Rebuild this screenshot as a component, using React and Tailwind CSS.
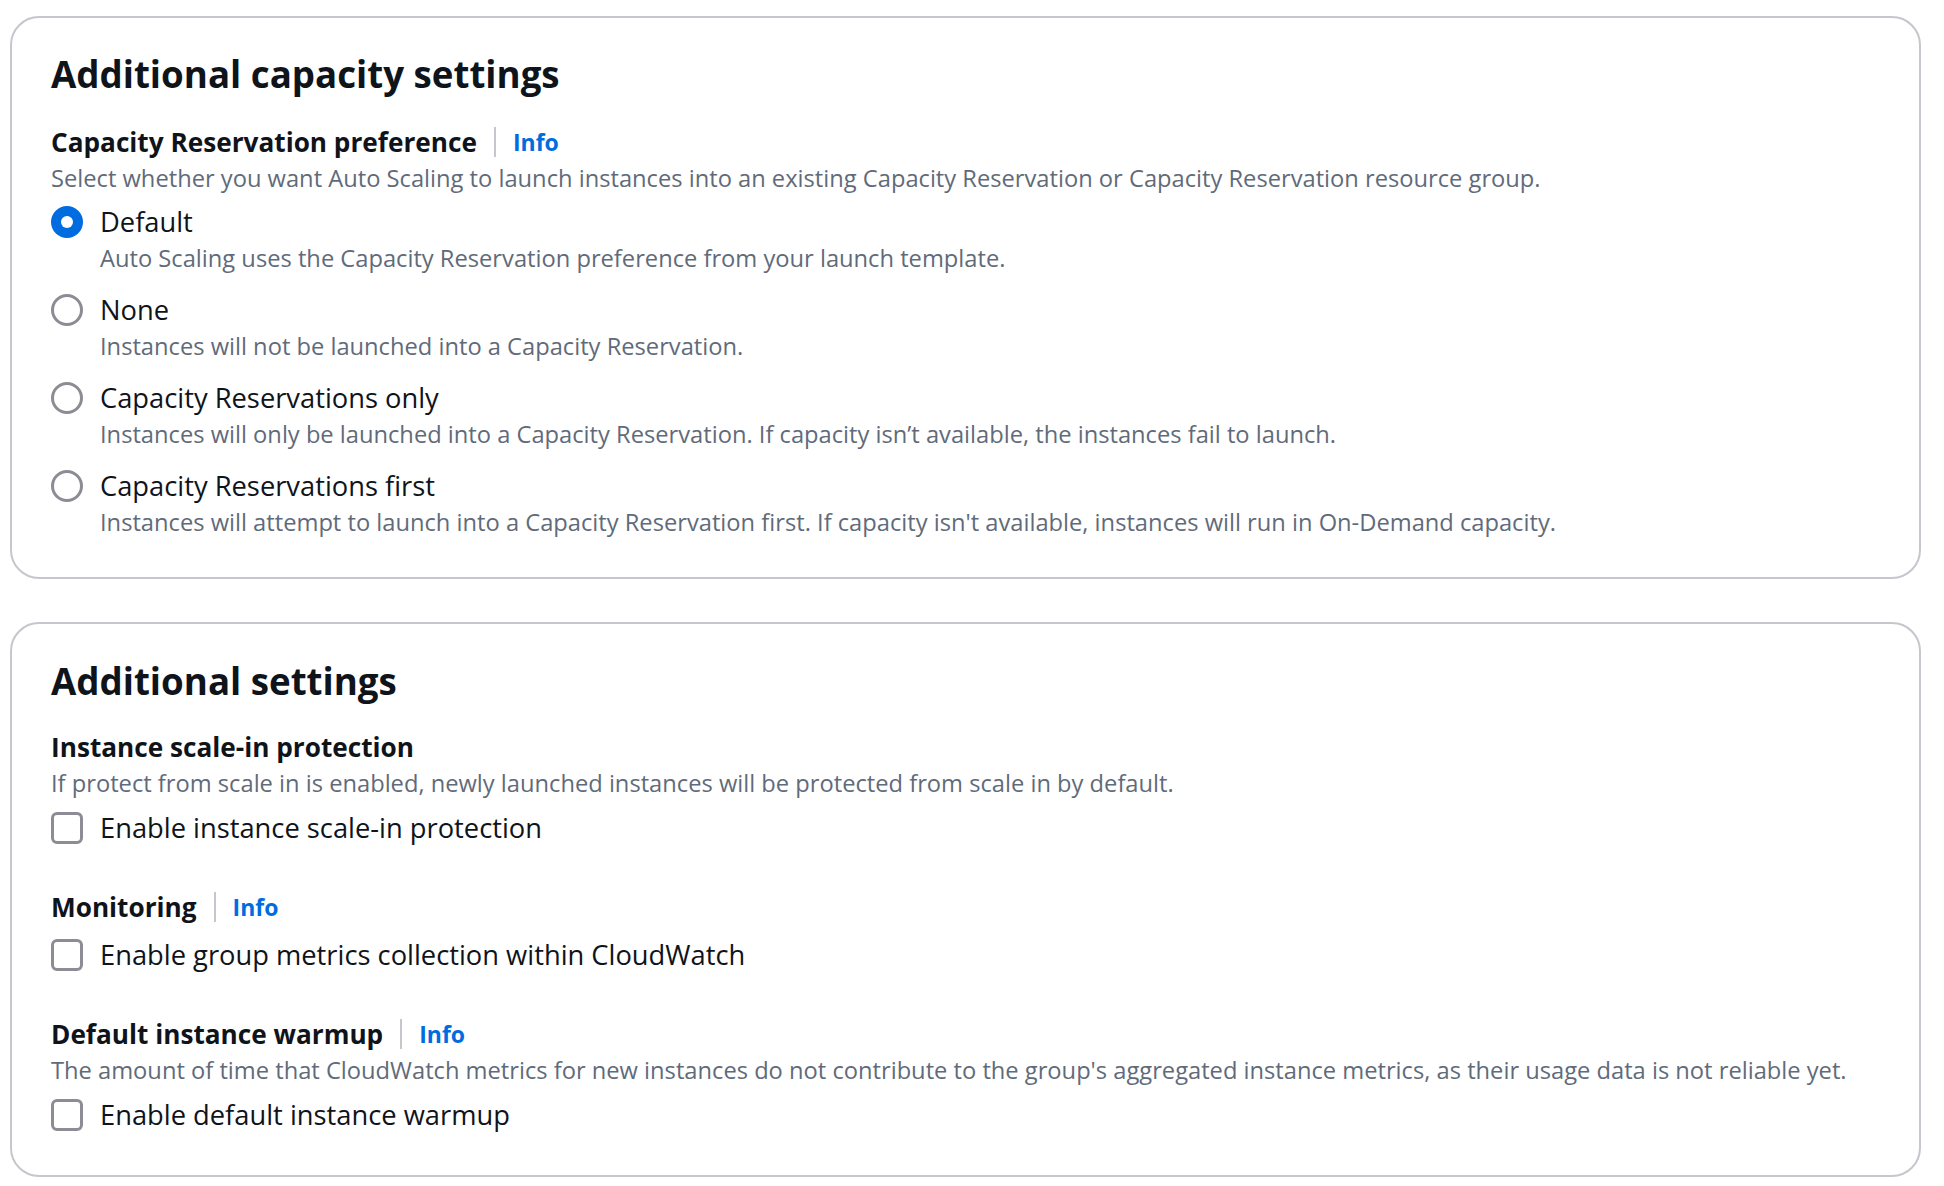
import { useState } from "react";

const capacityOptions = [
  {
    id: "default",
    label: "Default",
    description: "Auto Scaling uses the Capacity Reservation preference from your launch template.",
  },
  {
    id: "none",
    label: "None",
    description: "Instances will not be launched into a Capacity Reservation.",
  },
  {
    id: "only",
    label: "Capacity Reservations only",
    description:
      "Instances will only be launched into a Capacity Reservation. If capacity isn\u2019t available, the instances fail to launch.",
  },
  {
    id: "first",
    label: "Capacity Reservations first",
    description:
      "Instances will attempt to launch into a Capacity Reservation first. If capacity isn't available, instances will run in On-Demand capacity.",
  },
];

const FieldLabel = ({ children, info }) => (
  <div className="flex items-center h-[36px]">
    <span className="text-[26.2px] leading-[36px] font-bold text-[#0f141a]">{children}</span>
    {info && (
      <>
        <span className="ml-[17px] w-[2px] h-[30px] bg-[#c6c6cd]" />
        <a href="#" className="ml-[17px] text-[23px] leading-[36px] font-bold text-[#006ce0]">
          Info
        </a>
      </>
    )}
  </div>
);

const Description = ({ children }) => (
  <p className="text-[23.7px] leading-[36px] text-[#5f6b7a]">{children}</p>
);

const Radio = ({ checked }) =>
  checked ? (
    <span className="w-[32px] h-[32px] rounded-full bg-[#006ce0] flex items-center justify-center">
      <span className="w-[12px] h-[12px] rounded-full bg-white" />
    </span>
  ) : (
    <span className="w-[32px] h-[32px] rounded-full border-[3px] border-[#8c8c94] bg-white" />
  );

const Checkbox = ({ checked, onChange, label, className }) => (
  <label className={`flex items-center h-[36px] cursor-pointer ${className}`}>
    <span
      onClick={onChange}
      className={
        checked
          ? "w-[32px] h-[32px] rounded-[6px] bg-[#006ce0] border-[3px] border-[#006ce0]"
          : "w-[32px] h-[32px] rounded-[6px] border-[3px] border-[#8c8c94] bg-white"
      }
    />
    <span className="ml-[17px] text-[27.3px] leading-[36px] text-[#0f141a]">{label}</span>
  </label>
);

const Card = ({ title, className, children }) => (
  <div
    className={`w-[1911px] border-2 border-[#c6c6cd] rounded-[29px] bg-white pl-[39px] pr-[39px] ${className}`}
  >
    <h2 className="text-[36.7px] leading-[44px] font-bold text-[#0f141a]">{title}</h2>
    {children}
  </div>
);

export default function App() {
  const [preference, setPreference] = useState("default");
  const [scaleIn, setScaleIn] = useState(false);
  const [metrics, setMetrics] = useState(false);
  const [warmup, setWarmup] = useState(false);

  return (
    <div className="min-h-screen bg-white pl-[10px] pt-[16px] font-['Open_Sans',sans-serif]">
      {/* Additional capacity settings */}
      <Card title="Additional capacity settings" className="pt-[34px] pb-[37px]">
        <div className="mt-[28px]">
          <FieldLabel info>Capacity Reservation preference</FieldLabel>
          <Description>
            Select whether you want Auto Scaling to launch instances into an existing Capacity
            Reservation or Capacity Reservation resource group.
          </Description>
          <div className="mt-[8px] flex flex-col gap-[16px]">
            {capacityOptions.map((opt) => (
              <div
                key={opt.id}
                className="flex cursor-pointer"
                onClick={() => setPreference(opt.id)}
              >
                <div className="h-[36px] flex items-center">
                  <Radio checked={preference === opt.id} />
                </div>
                <div className="ml-[17px]">
                  <div className="text-[27.3px] leading-[36px] text-[#0f141a]">{opt.label}</div>
                  <Description>{opt.description}</Description>
                </div>
              </div>
            ))}
          </div>
        </div>
      </Card>

      {/* Additional settings */}
      <Card title="Additional settings" className="mt-[43px] pt-[35px] pb-[42px]">
        <div className="mt-[26px]">
          <FieldLabel>Instance scale-in protection</FieldLabel>
          <Description>
            If protect from scale in is enabled, newly launched instances will be protected from
            scale in by default.
          </Description>
          <Checkbox
            className="mt-[9px]"
            checked={scaleIn}
            onChange={() => setScaleIn(!scaleIn)}
            label="Enable instance scale-in protection"
          />
        </div>

        <div className="mt-[43px]">
          <FieldLabel info>Monitoring</FieldLabel>
          <Checkbox
            className="mt-[12px]"
            checked={metrics}
            onChange={() => setMetrics(!metrics)}
            label="Enable group metrics collection within CloudWatch"
          />
        </div>

        <div className="mt-[43px]">
          <FieldLabel info>Default instance warmup</FieldLabel>
          <Description>
            The amount of time that CloudWatch metrics for new instances do not contribute to the
            group's aggregated instance metrics, as their usage data is not reliable yet.
          </Description>
          <Checkbox
            className="mt-[9px]"
            checked={warmup}
            onChange={() => setWarmup(!warmup)}
            label="Enable default instance warmup"
          />
        </div>
      </Card>
    </div>
  );
}
